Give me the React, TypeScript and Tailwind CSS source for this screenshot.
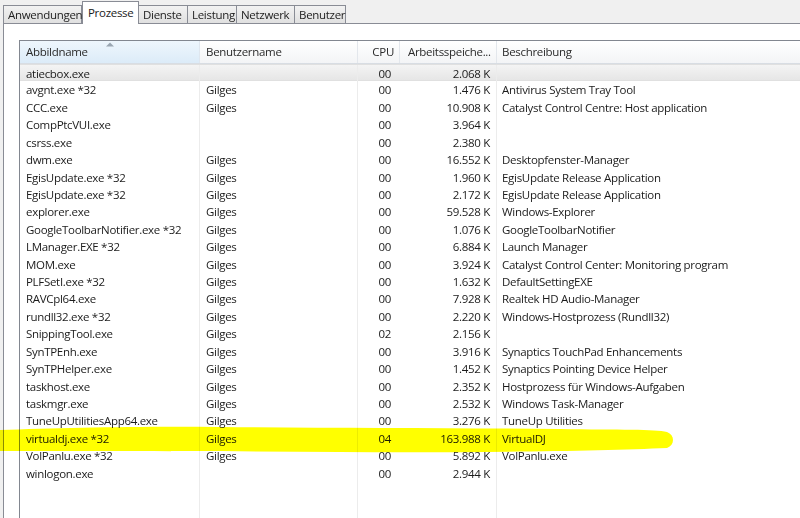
import React from 'react';

interface Prozess {
  name: string;
  user: string;
  cpu: string;
  mem: string;
  desc: string;
}

const prozesse: Prozess[] = [
  { name: 'atiecbox.exe', user: '', cpu: '00', mem: '2.068 K', desc: '' },
  { name: 'avgnt.exe *32', user: 'Gilges', cpu: '00', mem: '1.476 K', desc: 'Antivirus System Tray Tool' },
  { name: 'CCC.exe', user: 'Gilges', cpu: '00', mem: '10.908 K', desc: 'Catalyst Control Centre: Host application' },
  { name: 'CompPtcVUI.exe', user: '', cpu: '00', mem: '3.964 K', desc: '' },
  { name: 'csrss.exe', user: '', cpu: '00', mem: '2.380 K', desc: '' },
  { name: 'dwm.exe', user: 'Gilges', cpu: '00', mem: '16.552 K', desc: 'Desktopfenster-Manager' },
  { name: 'EgisUpdate.exe *32', user: 'Gilges', cpu: '00', mem: '1.960 K', desc: 'EgisUpdate Release Application' },
  { name: 'EgisUpdate.exe *32', user: 'Gilges', cpu: '00', mem: '2.172 K', desc: 'EgisUpdate Release Application' },
  { name: 'explorer.exe', user: 'Gilges', cpu: '00', mem: '59.528 K', desc: 'Windows-Explorer' },
  { name: 'GoogleToolbarNotifier.exe *32', user: 'Gilges', cpu: '00', mem: '1.076 K', desc: 'GoogleToolbarNotifier' },
  { name: 'LManager.EXE *32', user: 'Gilges', cpu: '00', mem: '6.884 K', desc: 'Launch Manager' },
  { name: 'MOM.exe', user: 'Gilges', cpu: '00', mem: '3.924 K', desc: 'Catalyst Control Center: Monitoring program' },
  { name: 'PLFSetI.exe *32', user: 'Gilges', cpu: '00', mem: '1.632 K', desc: 'DefaultSettingEXE' },
  { name: 'RAVCpl64.exe', user: 'Gilges', cpu: '00', mem: '7.928 K', desc: 'Realtek HD Audio-Manager' },
  { name: 'rundll32.exe *32', user: 'Gilges', cpu: '00', mem: '2.220 K', desc: 'Windows-Hostprozess (Rundll32)' },
  { name: 'SnippingTool.exe', user: 'Gilges', cpu: '02', mem: '2.156 K', desc: '' },
  { name: 'SynTPEnh.exe', user: 'Gilges', cpu: '00', mem: '3.916 K', desc: 'Synaptics TouchPad Enhancements' },
  { name: 'SynTPHelper.exe', user: 'Gilges', cpu: '00', mem: '1.452 K', desc: 'Synaptics Pointing Device Helper' },
  { name: 'taskhost.exe', user: 'Gilges', cpu: '00', mem: '2.352 K', desc: 'Hostprozess für Windows-Aufgaben' },
  { name: 'taskmgr.exe', user: 'Gilges', cpu: '00', mem: '2.532 K', desc: 'Windows Task-Manager' },
  { name: 'TuneUpUtilitiesApp64.exe', user: 'Gilges', cpu: '00', mem: '3.276 K', desc: 'TuneUp Utilities' },
  { name: 'virtualdj.exe *32', user: 'Gilges', cpu: '04', mem: '163.988 K', desc: 'VirtualDJ' },
  { name: 'VolPanlu.exe *32', user: 'Gilges', cpu: '00', mem: '5.892 K', desc: 'VolPanlu.exe' },
  { name: 'winlogon.exe', user: '', cpu: '00', mem: '2.944 K', desc: '' },
];

const tabs = [
  { label: 'Anwendungen', w: 'w-[79px]' },
  { label: 'Prozesse', w: 'w-[57px]', active: true },
  { label: 'Dienste', w: 'w-[49px]' },
  { label: 'Leistung', w: 'w-[49px]' },
  { label: 'Netzwerk', w: 'w-[58px]' },
  { label: 'Benutzer', w: 'w-[51px]' },
];

const cols = 'grid grid-cols-[180px_158px_42px_97px_1fr]';

export default function App() {
  return (
    <div className="relative w-[800px] h-[518px] overflow-hidden bg-[#f0f0f0] text-[11.5px] tracking-[-0.3px] text-[#1b1b1b] font-['Open_Sans','Noto_Sans',sans-serif] flex flex-col">
      {/* Registerkarten */}
      <div className="h-[23px] flex items-end pl-[3px] shrink-0">
        {tabs.map((t) =>
          t.active ? (
            <div
              key={t.label}
              className={`${t.w} h-[23px] -mb-px relative z-10 bg-white border border-b-0 border-[#898c95] pl-[5px] pt-[1px] leading-[20px] whitespace-nowrap`}
            >
              {t.label}
            </div>
          ) : (
            <div
              key={t.label}
              className={`${t.w} h-[18px] bg-gradient-to-b from-[#f2f2f2] to-[#e0e0e0] border border-b-0 border-l-0 first:border-l border-[#898c95] pl-[4px] leading-[17px] text-[#222] whitespace-nowrap`}
            >
              {t.label}
            </div>
          )
        )}
      </div>

      {/* Inhalt */}
      <div className="flex-1 ml-[3px] bg-white border-l border-t border-[#898c95] pt-[16px] pl-[15px] flex flex-col min-h-0">
        <div className="flex-1 border-l border-t border-[#828790] flex flex-col min-h-0">
          {/* Kopfzeile */}
          <div className={`${cols} h-[23px] shrink-0 bg-gradient-to-b from-white to-[#f3f4f6] border-b border-[#d8dde3] text-[#2a2a2a]`}>
            <div className="relative bg-gradient-to-b from-[#eef6fd] to-[#dcebf8] border-r border-[#dfe6ee] pl-[6px] leading-[22px]">
              Abbildname
              <svg className="absolute left-[86px] top-[1px]" width="8" height="5" viewBox="0 0 8 5">
                <path d="M0 4.5 L4 0.5 L8 4.5 Z" fill="#9aa6b2" />
              </svg>
            </div>
            <div className="border-r border-[#e3e7ec] pl-[6px] leading-[22px]">Benutzername</div>
            <div className="border-r border-[#e3e7ec] pr-[5px] text-right leading-[22px]">CPU</div>
            <div className="border-r border-[#e3e7ec] pl-[8px] leading-[22px] whitespace-nowrap overflow-hidden">Arbeitsspeiche...</div>
            <div className="pl-[5px] leading-[22px]">Beschreibung</div>
          </div>

          {/* Zeilen */}
          {prozesse.map((p, i) => (
            <div
              key={i}
              className={`${cols} h-[17.43px] shrink-0 leading-[17px] whitespace-nowrap ${
                i === 0 ? 'bg-gradient-to-b from-[#f4f4f4] to-[#e6e6e6] border-y border-[#e0e0e0] leading-[15px]' : ''
              }`}
            >
              <div className="pl-[6px] border-r border-[#ececec] overflow-hidden">{p.name}</div>
              <div className="pl-[6px] border-r border-[#ececec] overflow-hidden">{p.user}</div>
              <div className="pr-[9px] text-right">{p.cpu}</div>
              <div className="pr-[6px] text-right border-r border-[#ececec]">{p.mem}</div>
              <div className="pl-[5px] overflow-hidden">{p.desc}</div>
            </div>
          ))}
          <div className={`${cols} flex-1`}>
            <div className="border-r border-[#ececec]" />
            <div className="border-r border-[#ececec]" />
            <div />
            <div className="border-r border-[#ececec]" />
            <div />
          </div>
        </div>
      </div>

      {/* Textmarker */}
      <svg
        className="absolute left-0 top-0 pointer-events-none mix-blend-multiply"
        width="800"
        height="518"
        viewBox="0 0 800 518"
      >
        <path
          d="M0 430 C60 428 140 426 220 427 C330 428 450 428 560 429 C620 430 655 429 667 432 C675 435 675 445 667 448 C600 451 470 453 340 452 C220 451 90 451 0 451 Z"
          fill="#ffff00"
        />
      </svg>
    </div>
  );
}
